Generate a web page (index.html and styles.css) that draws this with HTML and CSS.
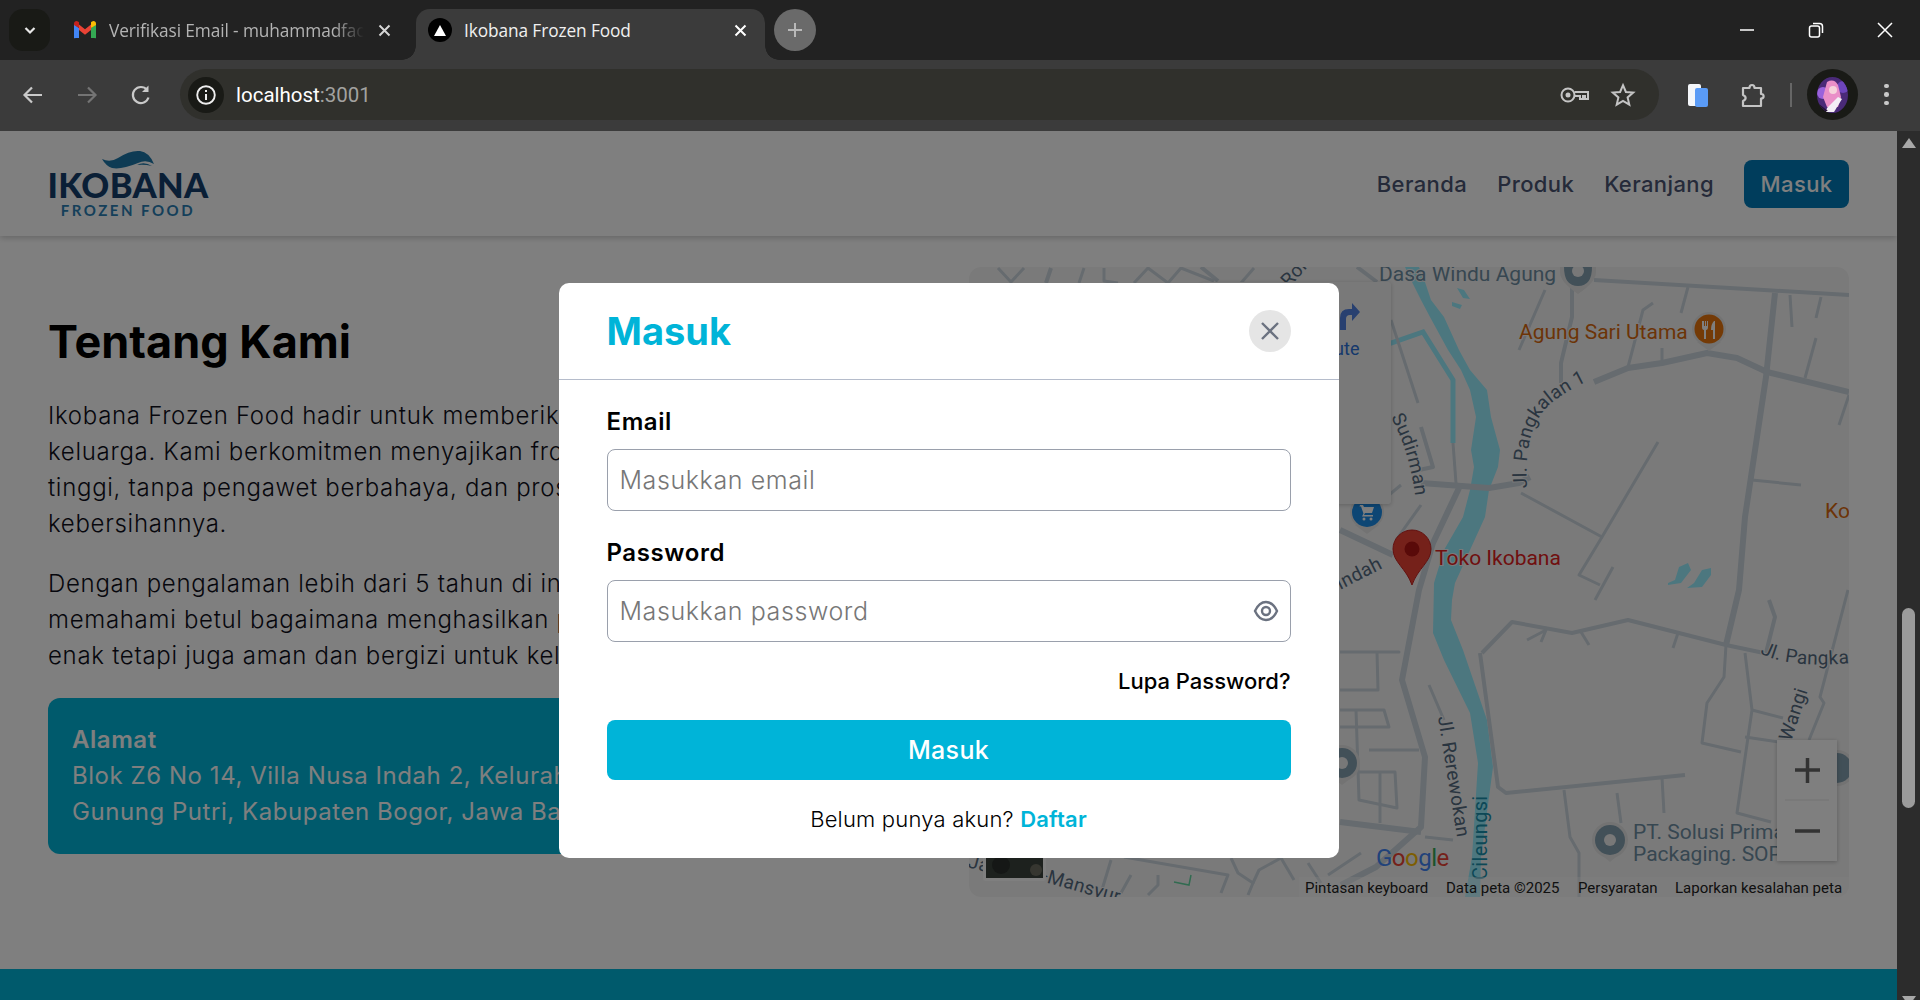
FILE: index.html
```html
<!DOCTYPE html>
<html lang="id">
<head>
    <meta charset="UTF-8">
    <title>Ikobana Frozen Food</title>
    <link rel="stylesheet" href="styles.css">
</head>
<body>
    <div class="tabstrip">
        <div class="tab-search">
            <svg width="16" height="16" viewBox="0 0 16 16"><path d="M3.5 6 8 10.5 12.5 6" fill="none" stroke="#e8e8e8" stroke-width="2.2"/></svg>
        </div>
        <div class="tab">
            <svg class="tab-icon" width="24" height="20" viewBox="0 0 24 20">
                <path d="M1 18V4l5 4v10H2.500A1.500 1.500 0 0 1 1 18z" fill="#4285f4"/>
                <path d="M23 18V4l-5 4v10h3.500A1.500 1.500 0 0 0 23 18z" fill="#34a853"/>
                <path d="M6 10V4.500l6 4.700 6-4.700V10l-6 4.700z" fill="#ea4335"/>
                <path d="M1 5V3.500C1 1.300 3.400.3 5 1.500L6 2.300V8z" fill="#c5221f"/>
                <path d="M23 5V3.500c0-2.200-2.400-3.200-4-2L18 2.300V8z" fill="#fbbc04"/>
            </svg>
            <span class="tab-title">Verifikasi Email - muhammadfachri</span>
            <svg class="tab-close" width="13" height="13" viewBox="0 0 13 13"><path d="M1.500 1.500l10 10M11.500 1.500l-10 10" stroke="#d5d5d5" stroke-width="2"/></svg>
        </div>
        <div class="tab tab-active">
            <span class="favicon"><i></i></span>
            <span class="tab-title">Ikobana Frozen Food</span>
            <svg class="tab-close" width="13" height="13" viewBox="0 0 13 13"><path d="M1.500 1.500l10 10M11.500 1.500l-10 10" stroke="#fff" stroke-width="2"/></svg>
        </div>
        <div class="new-tab">
            <svg width="18" height="18" viewBox="0 0 18 18"><path d="M9 2v14M2 9h14" stroke="#b9b9b9" stroke-width="2"/></svg>
        </div>
        <div class="window-controls">
            <svg width="16" height="16" viewBox="0 0 16 16"><path d="M1 8h14" stroke="#fff" stroke-width="1.500"/></svg>
            <svg width="16" height="16" viewBox="0 0 16 16"><rect x="1.500" y="4" width="10" height="11" rx="2" fill="none" stroke="#fff" stroke-width="1.500"/><path d="M5 1.500h6.500a3 3 0 0 1 3 3V11" fill="none" stroke="#fff" stroke-width="1.500"/></svg>
            <svg width="16" height="16" viewBox="0 0 16 16"><path d="M1 1l14 14M15 1 1 15" stroke="#fff" stroke-width="1.500"/></svg>
        </div>
    </div>

    <div class="toolbar">
        <div class="nav-icons">
            <svg width="24" height="24" viewBox="0 0 24 24"><path d="M21 12H4M11 4.500 3.500 12l7.500 7.500" fill="none" stroke="#c9c9c9" stroke-width="2.200"/></svg>
            <svg width="24" height="24" viewBox="0 0 24 24"><path d="M3 12h17M13 4.500l7.500 7.500-7.500 7.500" fill="none" stroke="#747474" stroke-width="2.200"/></svg>
            <svg width="24" height="24" viewBox="0 0 24 24"><path d="M19.500 14.500A8 8 0 1 1 18 6.800" fill="none" stroke="#c9c9c9" stroke-width="2.200"/><path d="M19.500 2.500v6.500H13z" fill="#c9c9c9"/></svg>
        </div>
        <div class="omnibox">
            <span class="site-info">
                <svg width="22" height="22" viewBox="0 0 22 22"><circle cx="11" cy="11" r="8.800" fill="none" stroke="#eee" stroke-width="1.900"/><path d="M11 10v6M11 6v2" stroke="#eee" stroke-width="2"/></svg>
            </span>
            <span class="url">localhost<em>:3001</em></span>
            <span class="omni-icons">
                <svg width="30" height="20" viewBox="0 0 30 20"><circle cx="8" cy="10" r="6.500" fill="none" stroke="#c4c4c4" stroke-width="2"/><circle cx="8" cy="10" r="2.500" fill="#c4c4c4"/><path d="M14.500 7H28v7h-3v-3h-2v3h-3v-3h-5.500" fill="none" stroke="#c4c4c4" stroke-width="2"/></svg>
                <svg width="26" height="26" viewBox="0 0 26 26"><path d="M13 3.200l2.900 6.800 7.300.6-5.600 4.800 1.700 7.200L13 18.800l-6.300 3.800 1.700-7.200-5.600-4.800 7.300-.6z" fill="none" stroke="#c4c4c4" stroke-width="2"/></svg>
            </span>
        </div>
        <div class="toolbar-end">
            <svg class="ext-blue" width="22" height="26" viewBox="0 0 22 26"><rect x="1" y="2" width="13" height="22" rx="2" fill="#f4f6fa"/><rect x="8" y="6" width="13" height="19" rx="2" fill="#5a9bf6"/></svg>
            <svg class="ext-puzzle" width="26" height="28" viewBox="0 0 26 28"><path d="M3 7h6.500c0-4 5-4 5 0H21v6c3.500 0 3.500 4.500 0 4.500V25H3v-5c3.500-1.500 3.500-4.500 0-6z" fill="none" stroke="#c4c4c4" stroke-width="2.200" stroke-linejoin="round"/></svg>
            <span class="toolbar-sep"></span>
            <span class="avatar-ring">
                <svg width="31" height="36" viewBox="0 0 31 36">
                    <rect width="31" height="36" fill="#4a2a78"/>
                    <circle cx="6" cy="16" r="6" fill="#9a62dc"/>
                    <circle cx="26" cy="10" r="6" fill="#6d45bb"/>
                    <path d="M10 5q7-4 11 3l3 12-3 10H10l-4-10z" fill="#ea8fc8"/>
                    <circle cx="16" cy="13" r="4" fill="#f6d3dc"/>
                    <path d="M10 31l11-11 4 2-8 13H9z" fill="#f3eef5"/>
                    <path d="M2 27l9 7H3z" fill="#251338"/>
                </svg>
            </span>
            <span class="kebab"><i></i><i></i><i></i></span>
        </div>
    </div>

    <div class="viewport">
        <div class="page">
            <header class="site-header">
                <div class="logo">
                    <svg class="logo-wave" width="54" height="20" viewBox="0 0 54 20"><path d="M1 9q8 4 16-1 12-8 22-7 9 1 14 13-8-5-16-1Q20 20 11 18 5 16 1 9z" fill="#1c76a8"/><path d="M36 15q7-4 15 1-8-2-15-1z" fill="#1c76a8"/></svg>
                    <div class="logo-name">IKOBANA</div>
                    <div class="logo-sub">FROZEN FOOD</div>
                </div>
                <nav class="site-nav">
                    <a href="#">Beranda</a>
                    <a href="#">Produk</a>
                    <a href="#">Keranjang</a>
                    <a href="#" class="nav-login">Masuk</a>
                </nav>
            </header>

            <section class="about">
                <div class="about-text">
                    <h2>Tentang Kami</h2>
                    <p>Ikobana Frozen Food hadir untuk memberikan pilihan terbaik bagi<br>keluarga. Kami berkomitmen menyajikan frozen food berkualitas<br>tinggi, tanpa pengawet berbahaya, dan proses produksi yang terjaga<br>kebersihannya.</p>
                    <p>Dengan pengalaman lebih dari 5 tahun di industri makanan, kami<br>memahami betul bagaimana menghasilkan produk yang tidak hanya<br>enak tetapi juga aman dan bergizi untuk keluarga Indonesia.</p>
                    <div class="address-card">
                        <strong>Alamat</strong>
                        <span>Blok Z6 No 14, Villa Nusa Indah 2, Kelurahan Bojong Kulur, Kec.</span>
                        <span>Gunung Putri, Kabupaten Bogor, Jawa Barat</span>
                    </div>
                </div>

                <div class="map">
                    <svg width="881" height="630" viewBox="968 267 881 630">
                        <!-- water -->
                        <path class="water" d="M1404 267L1411 282 1420 300 1429 317 1447 350 1460 370 1469 390 1475 417 1470 450 1473 467 1469 490 1462 517 1443 550 1433 583 1432 633 1443 660 1469 713 1477 763 1471 857 1464 897 1479 897 1480 857 1492 767 1486 720 1462 650 1450 620 1451 600 1454 583 1469 550 1484 517 1488 490 1497 467 1499 450 1490 417 1486 390 1469 370 1458 350 1443 317 1430 300 1424 282 1418 267z"/>
                        <path class="canal" d="M1340 355L1390 343 1422 332 1452 380 1452 443"/>
                        <path class="water" d="M1456 288l7 2 6 9-7-1zM1451 302l10 3-2 4-8-3zM1667 583L1674 580 1678 567 1687 563 1690 570 1680 583 1667 585zM1686 588L1693 583 1701 570 1710 568 1710 575 1701 587z"/>

                        <!-- main roads -->
                        <g class="road-wide">
                            <path d="M1458 488L1432 543 1418 590 1401 680 1424 757 1420 827 1375 867 1340 885"/>
                            <path d="M1420 483L1488 488 1518 483 1529 477"/>
                            <path d="M1593 382L1627 368 1661 363 1706 353 1736 358 1766 372 1848 392"/>
                            <path d="M1774 293L1765 377 1744 517 1738 590 1725 645"/>
                            <path d="M1339 530L1392 555"/>
                            <path d="M1339 822L1420 832"/>
                        </g>
                        <g class="road">
                            <path d="M1593 280L1763 290 1848 295"/>
                            <path d="M1725 645L1763 653"/>
                            <path d="M1481 653L1511 622 1571 633 1627 620 1725 645"/>
                            <path d="M1479 653L1497 787 1505 793 1684 775"/>
                            <path d="M1571 287L1571 317 1560 363 1560 383"/>
                            <path d="M1420 427L1432 467 1418 470"/>
                            <path d="M1768 600L1774 617 1765 653"/>
                            <path d="M1050 268L1045 283"/>
                            <path d="M1200 267L1217 281"/>
                            <path d="M1356 267L1376 282"/>
                        </g>
                        <g class="road-thin">
                            <path d="M1518 350L1544 290"/>
                            <path d="M1627 367L1642 310 1652 303"/>
                            <path d="M1680 313L1687 287"/>
                            <path d="M1661 363L1661 348"/>
                            <path d="M1789 295L1791 327"/>
                            <path d="M1820 297L1815 318"/>
                            <path d="M1815 338L1804 378"/>
                            <path d="M1657 442L1601 537 1520 493"/>
                            <path d="M1601 537L1578 575 1599 585"/>
                            <path d="M1612 567L1594 600"/>
                            <path d="M1751 480L1800 485"/>
                            <path d="M1390 320L1417 403"/>
                            <path d="M1452 443L1455 483"/>
                            <path d="M1370 510L1400 485"/>
                            <path d="M1395 540L1420 505"/>
                            <path d="M1563 790L1569 837 1578 853 1578 897"/>
                            <path d="M1616 793L1620 823"/>
                            <path d="M1661 778L1663 813"/>
                            <path d="M1738 590L1725 645 1723 677 1706 703 1701 743 1740 752"/>
                            <path d="M1744 653L1751 710 1736 813 1770 822"/>
                            <path d="M1751 710L1782 718"/>
                            <path d="M1744 737L1778 742"/>
                            <path d="M1847 590L1819 697 1823 703 1808 740"/>
                            <path d="M1526 640L1545 630 1540 642"/>
                            <path d="M1580 632L1588 645"/>
                            <path d="M1677 633L1672 648"/>
                            <path d="M1339 652L1398 652 1376 652 1377 690 1339 690"/>
                            <path d="M1339 710L1383 710 1388 727 1339 727"/>
                            <path d="M1355 710L1358 800 1396 808 1394 772 1358 772"/>
                            <path d="M1368 750L1418 750"/>
                            <path d="M1379 772L1379 823"/>
                            <path d="M1428 685L1443 720"/>
                            <path d="M1424 837L1452 840"/>
                            <path d="M1110 860L1100 893"/>
                            <path d="M1130 875L1120 893"/>
                            <path d="M1157 875L1157 885 1147 895"/>
                            <path d="M1123 857L1227 875 1220 893"/>
                            <path d="M1230 858L1237 873 1252 883 1247 895"/>
                            <path d="M1280 858L1258 870 1252 883"/>
                            <path d="M1280 858L1293 880"/>
                            <path d="M1307 863L1320 883"/>
                            <path d="M1327 875L1360 853"/>
                            <path d="M997 268L1010 282 1023 268"/>
                            <path d="M1083 268L1078 283"/>
                            <path d="M1103 268L1103 281 1117 283"/>
                            <path d="M1133 283L1147 268 1167 283 1180 268 1213 281"/>
                            <path d="M1253 268L1240 283"/>
                            <path d="M1838 425L1848 395"/>
                        </g>
                        <path class="green-line" d="M1173 882L1188 885 1190 875"/>

                        <!-- road names -->
                        <path id="pangkalan" class="guide" d="M1526 488Q1522 430 1548 405 1568 388 1606 372"/>
                        <text class="road-name"><textPath href="#pangkalan">Jl. Pangkalan 1</textPath></text>
                        <path id="sudirman" class="guide" d="M1390 417Q1408 450 1414 495"/>
                        <text class="road-name"><textPath href="#sudirman">Sudirman</textPath></text>
                        <path id="pangka" class="guide" d="M1759 653Q1790 670 1860 662"/>
                        <text class="road-name"><textPath href="#pangka">Jl. Pangkalan</textPath></text>
                        <text class="road-name" transform="translate(1437 717) rotate(81)">Jl. Rerewokan</text>
                        <text class="road-name" transform="translate(1790 742) rotate(-72)">Wangi</text>
                        <text class="road-name" transform="translate(1339 590) rotate(-27)">Indah</text>
                        <text class="road-name" transform="translate(1023 876) rotate(16)">Al-Mansyur</text>
                        <text class="road-name" transform="translate(966 867) rotate(15)">Ja</text>
                        <text class="road-name" transform="translate(1288 288) rotate(-48)">Ron</text>
                        <text class="river-name" transform="translate(1486 880) rotate(-90)">Cileungsi</text>

                        <!-- places -->
                        <text class="place place-gray" x="1378" y="281">Dasa Windu Agung</text>
                        <path class="pin-halo" d="M1559 267h36v5q0 10-18 22-18-12-18-22z"/>
                        <path class="pin-gray" d="M1563 267h28q0 19-14 19t-14-19z"/>
                        <circle class="pin-eye" cx="1577" cy="271" r="6"/>

                        <text class="place place-orange" x="1518" y="339">Agung Sari Utama</text>
                        <circle class="pin-halo" cx="1708" cy="329" r="17"/>
                        <path class="pin-halo" d="M1696 342h24l-12 9z"/>
                        <circle class="pin-orange" cx="1708" cy="329" r="14.500"/>
                        <path class="pin-icon" d="M1701 321v6q0 3 2 3v9h2v-9q2 0 2-3v-6h-1v5h-1v-5h-1v5h-1v-5zM1713 321q-3 3-3 9h2v9h2v-18z"/>

                        <text class="place place-orange" x="1824" y="518">Ko</text>

                        <circle class="pin-halo" cx="1366" cy="512" r="17"/>
                        <path class="pin-halo" d="M1354 525h24l-12 9z"/>
                        <circle class="pin-blue" cx="1366" cy="512" r="15"/>
                        <path class="pin-icon" d="M1359 505h3l1 2h10l-2 6h-7l-1 2h9v1.500h-11l1.500-3-2.500-7h-1.500z"/>
                        <circle class="pin-icon" cx="1363" cy="519" r="1.500"/>
                        <circle class="pin-icon" cx="1370" cy="519" r="1.500"/>

                        <circle class="pin-halo" cx="1341" cy="763" r="18"/>
                        <path class="pin-halo" d="M1329 776h24l-12 9z"/>
                        <circle class="pin-gray" cx="1341" cy="763" r="15"/>
                        <circle class="pin-eye" cx="1341" cy="763" r="6"/>

                        <circle class="pin-halo" cx="1836" cy="768" r="18"/>
                        <circle class="pin-gray" cx="1836" cy="768" r="15"/>

                        <circle class="pin-halo" cx="1609" cy="840" r="18"/>
                        <path class="pin-halo" d="M1597 852h24l-12 10z"/>
                        <circle class="pin-gray" cx="1609" cy="840" r="15"/>
                        <circle class="pin-eye" cx="1609" cy="840" r="6"/>
                        <text class="place place-gray" x="1632" y="839">PT. Solusi Prima</text>
                        <text class="place place-gray" x="1632" y="861">Packaging. SOP</text>

                        <path class="marker" d="M1411 585C1405 568 1392 562 1392 549a19 19 0 0 1 38 0C1430 562 1417 568 1411 585z"/>
                        <circle class="marker-dot" cx="1411" cy="549" r="7.500"/>
                        <text class="place place-red" x="1434" y="565">Toko Ikobana</text>

                        <!-- street view panel behind the dialog -->
                        <rect class="map-panel" x="1200" y="282" width="190" height="222" rx="3"/>
                        <path class="panel-arrow" d="M1339 330v-12q0-9 9-9h3v-6l8 9-8 9v-6h-2q-4 0-4 4v11z"/>
                        <text class="panel-label" x="1322" y="355">Rute</text>

                        <!-- satellite thumbnail -->
                        <rect class="thumb-frame" x="982" y="840" width="63" height="41" rx="3"/>
                        <rect class="thumb-photo" x="985" y="840" width="57" height="38"/>
                        <circle class="thumb-spot" cx="1000" cy="865" r="9"/>
                        <circle class="thumb-spot2" cx="1035" cy="870" r="6"/>

                        <!-- attribution -->
                        <rect class="attrib-bg" x="1298" y="877" width="551" height="20"/>
                        <text class="attrib" x="1304" y="893">Pintasan keyboard</text>
                        <text class="attrib" x="1445" y="893">Data peta ©2025</text>
                        <text class="attrib" x="1577" y="893">Persyaratan</text>
                        <text class="attrib" x="1674" y="893">Laporkan kesalahan peta</text>
                        <text class="google-logo" x="1375" y="866"><tspan fill="#4285f4">G</tspan><tspan fill="#ea4335">o</tspan><tspan fill="#fbbc04">o</tspan><tspan fill="#4285f4">g</tspan><tspan fill="#34a853">l</tspan><tspan fill="#ea4335">e</tspan></text>

                        <!-- zoom control -->
                        <rect class="zoom-box" x="1776" y="740" width="60" height="121"/>
                        <path class="zoom-sep" d="M1784 800h44"/>
                        <path class="zoom-mark" d="M1794 770h25M1806.500 758v25M1794 831h25"/>
                    </svg>
                </div>
            </section>

            <footer class="site-footer"></footer>

            <div class="overlay">
                <div class="modal">
                    <div class="modal-head">
                        <h3>Masuk</h3>
                        <button class="modal-close" type="button">
                            <svg width="22" height="22" viewBox="0 0 22 22"><path d="M3 3l16 16M19 3 3 19" stroke="#6b7280" stroke-width="2.400"/></svg>
                        </button>
                    </div>
                    <form class="modal-body">
                        <label for="email">Email</label>
                        <input id="email" type="email" placeholder="Masukkan email">
                        <label for="password">Password</label>
                        <div class="password-field">
                            <input id="password" type="password" placeholder="Masukkan password">
                            <svg class="eye" width="26" height="26" viewBox="0 0 26 26"><path d="M2 13C5 6.500 8.500 4 13 4s8 2.500 11 9c-3 6.500-6.500 9-11 9s-8-2.500-11-9z" fill="none" stroke="#6b7280" stroke-width="2.400"/><circle cx="13" cy="13" r="4" fill="none" stroke="#6b7280" stroke-width="2.400"/></svg>
                        </div>
                        <div class="forgot"><a href="#">Lupa Password?</a></div>
                        <button class="submit" type="button">Masuk</button>
                        <p class="signup">Belum punya akun? <a href="#">Daftar</a></p>
                    </form>
                </div>
            </div>
        </div>

        <div class="scrollbar">
            <i class="arrow-up"></i>
            <div class="scroll-track"><div class="scroll-thumb"></div></div>
            <i class="arrow-down"></i>
        </div>
    </div>
</body>
</html>
```

FILE: styles.css
```css
* {
    box-sizing: border-box;
}

html, body {
    height: 100%;
}

body {
    margin: 0;
    height: 1000px;
    overflow: hidden;
    display: flex;
    flex-direction: column;
    font-family: Inter, "Noto Sans", sans-serif;
    background: #222;
}

/* Browser chrome */
.tabstrip {
    height: 60px;
    display: flex;
    align-items: flex-end;
    background: #222;
    font-family: "Open Sans", sans-serif;
}

.tab-search {
    width: 41px;
    height: 42px;
    margin: 0 0 9px 9px;
    border-radius: 14px;
    background: #191a16;
    display: flex;
    align-items: center;
    justify-content: center;
}

.tab {
    width: 349px;
    height: 51px;
    padding: 0 18px 9px 12px;
    display: flex;
    align-items: center;
    color: #b4b4b4;
    font-size: 17.300px;
    letter-spacing: -0.1px;
}

.tab:nth-child(2) {
    width: 357px;
    margin-left: 9px;
    padding-left: 14px;
    padding-right: 25px;
}

.tab-icon {
    margin-right: 12px;
    flex: none;
}

.tab-title {
    flex: 1;
    overflow: hidden;
    white-space: nowrap;
    -webkit-mask-image: linear-gradient(90deg, #000 88%, transparent);
    mask-image: linear-gradient(90deg, #000 88%, transparent);
}

.tab-close {
    flex: none;
    margin-left: 14px;
}

.tab-active {
    position: relative;
    background: #3b3b3b;
    border-radius: 14px 14px 0 0;
    color: #f0f0f0;
}

/* the little outward curves at the foot of the active tab */
.tab-active::before, .tab-active::after {
    content: "";
    position: absolute;
    bottom: 0;
    width: 14px;
    height: 14px;
}

.tab-active::before {
    left: -14px;
    background: radial-gradient(circle at 0 0, transparent 13.500px, #3b3b3b 14px);
}

.tab-active::after {
    right: -14px;
    background: radial-gradient(circle at 100% 0, transparent 13.500px, #3b3b3b 14px);
}

.tab-active .tab-title {
    -webkit-mask-image: none;
    mask-image: none;
}

.favicon {
    width: 24px;
    height: 24px;
    margin-right: 12px;
    flex: none;
    border-radius: 50%;
    background: #000;
    display: flex;
    align-items: center;
    justify-content: center;
}

.favicon i {
    width: 0;
    height: 0;
    border-left: 6px solid transparent;
    border-right: 6px solid transparent;
    border-bottom: 11px solid #fff;
}

.new-tab {
    width: 42px;
    height: 42px;
    margin: 0 0 9px 9px;
    border-radius: 50%;
    background: #6a6a6a;
    display: flex;
    align-items: center;
    justify-content: center;
}

.window-controls {
    margin-left: auto;
    height: 60px;
    display: flex;
    align-items: center;
    gap: 53px;
    padding-right: 27px;
}

.toolbar {
    height: 71px;
    padding-bottom: 2px;
    background: #3b3b3b;
    display: flex;
    align-items: center;
}

.nav-icons {
    width: 180px;
    padding-left: 21px;
    display: flex;
    gap: 30px;
}

.omnibox {
    width: 1479px;
    height: 51px;
    border-radius: 26px;
    background: #30302c;
    display: flex;
    align-items: center;
    padding-left: 8px;
}

.site-info {
    width: 36px;
    height: 36px;
    border-radius: 50%;
    background: #191a16;
    display: flex;
    align-items: center;
    justify-content: center;
}

.url {
    margin-left: 12px;
    font-family: Roboto, sans-serif;
    font-size: 20.500px;
    color: #fff;
}

.url em {
    font-style: normal;
    color: #a2a2a0;
}

.omni-icons {
    margin-left: auto;
    padding-right: 23px;
    display: flex;
    align-items: center;
    gap: 20px;
}

.toolbar-end {
    flex: 1;
    display: flex;
    align-items: center;
    height: 51px;
    padding-left: 28px;
}

.ext-puzzle {
    margin-left: 31px;
}

.toolbar-sep {
    width: 2px;
    height: 24px;
    margin-left: 24px;
    background: #666;
}

.avatar-ring {
    width: 51px;
    height: 51px;
    margin-left: 15px;
    border-radius: 50%;
    background: #191a16;
    display: flex;
    align-items: center;
    justify-content: center;
}

.avatar-ring svg {
    border-radius: 50%;
}

.kebab {
    margin-left: 26px;
    display: flex;
    flex-direction: column;
    gap: 4px;
}

.kebab i {
    width: 4.500px;
    height: 4.500px;
    border-radius: 50%;
    background: #c9c9c9;
}

/* Page */
.viewport {
    flex: 1;
    min-height: 0;
    display: flex;
}

.page {
    flex: 1;
    position: relative;
    overflow: hidden;
    background: #fff;
    color: #0f0f1a;
}

.site-header {
    height: 105px;
    padding: 0 48px;
    display: flex;
    align-items: center;
    justify-content: space-between;
    background: #fff;
    box-shadow: 0 2px 6px rgba(0, 0, 0, 0.2);
    position: relative;
}

.logo {
    width: 160px;
    display: flex;
    flex-direction: column;
    align-items: center;
    padding-top: 2px;
}

.logo-wave {
    display: block;
    margin-bottom: -1px;
}

.logo-name {
    font-family: Lato, sans-serif;
    font-weight: 900;
    font-size: 34.500px;
    line-height: 32px;
    letter-spacing: 0.3px;
    color: #143e6c;
}

.logo-sub {
    font-family: Lato, sans-serif;
    font-weight: 700;
    font-size: 15px;
    line-height: 18px;
    letter-spacing: 2.500px;
    color: #2a7fb5;
}

.site-nav {
    display: flex;
    align-items: center;
    gap: 30px;
}

.site-nav a {
    font-size: 22px;
    font-weight: 500;
    letter-spacing: 0.4px;
    color: #4b5573;
    text-decoration: none;
}

.site-nav .nav-login {
    height: 48px;
    width: 105px;
    display: flex;
    align-items: center;
    justify-content: center;
    border-radius: 8px;
    background: #007ab8;
    color: #fff;
}

.about {
    height: 733px;
    padding: 31px 48px 72px;
    display: grid;
    grid-template-columns: 1fr 1fr;
    gap: 40px;
    align-items: center;
}

.about-text {
    padding-top: 2px;
}

.about-text h2 {
    margin: 0 0 26px;
    font-size: 45px;
    line-height: 60px;
    font-weight: 700;
    color: #000;
    white-space: nowrap;
}

.about-text p {
    margin: 0 0 24px;
    font-size: 24px;
    line-height: 36px;
    font-weight: 300;
    letter-spacing: 0.7px;
    white-space: nowrap;
}

.address-card {
    height: 156px;
    padding: 24px;
    border-radius: 12px;
    background: #00b4d8;
    color: #fff;
    display: flex;
    flex-direction: column;
    font-size: 24px;
    line-height: 36px;
    font-weight: 400;
    letter-spacing: 0.55px;
    white-space: nowrap;
    overflow: hidden;
}

.address-card strong {
    font-weight: 600;
}

.map {
    height: 630px;
    border-radius: 12px;
    overflow: hidden;
    background: #f5f5f5;
    font-family: Roboto, sans-serif;
}

.map svg {
    display: block;
}

.water {
    fill: #98eeff;
}

.canal {
    fill: none;
    stroke: #98eeff;
    stroke-width: 5;
}

.road-wide, .road, .road-thin {
    fill: none;
    stroke: #ccd6de;
    stroke-linejoin: round;
}

.road-wide {
    stroke-width: 6;
}

.road {
    stroke-width: 4;
}

.road-thin {
    stroke-width: 3;
}

.green-line {
    fill: none;
    stroke: #62d6a0;
    stroke-width: 1.500;
}

.guide {
    fill: none;
}

.road-name {
    font-size: 19px;
    fill: #546a80;
    letter-spacing: 0.3px;
    paint-order: stroke;
    stroke: #f5f5f5;
    stroke-width: 2px;
}

.river-name {
    font-size: 20px;
    fill: #1a90ad;
    letter-spacing: 0.3px;
}

.place {
    font-size: 21px;
    paint-order: stroke;
    stroke: #f5f5f5;
    stroke-width: 2px;
}

.place-gray {
    fill: #6f8ea3;
}

.place-orange {
    fill: #d9690f;
}

.place-red {
    fill: #e02020;
}

.pin-halo {
    fill: #e6e6e6;
}

.pin-gray {
    fill: #84a0b0;
}

.pin-eye {
    fill: #f0f0f0;
}

.pin-orange {
    fill: #e8750c;
}

.pin-blue {
    fill: #1a8ce8;
}

.pin-icon {
    fill: #fff;
}

.marker {
    fill: #ea4335;
    stroke: #c5221f;
    stroke-width: 1;
}

.marker-dot {
    fill: #b31412;
}

.map-panel {
    fill: #f3f3f3;
    filter: drop-shadow(0 1px 2px rgba(0, 0, 0, 0.2));
}

.panel-arrow {
    fill: #5080e0;
}

.panel-label {
    font-size: 18px;
    fill: #2a70d8;
}

.thumb-frame {
    fill: #fff;
}

.thumb-photo {
    fill: #3a423c;
}

.thumb-spot {
    fill: #2a2f2c;
}

.thumb-spot2 {
    fill: #6d6d60;
}

.attrib-bg {
    fill: rgba(255, 255, 255, 0.4);
}

.attrib {
    font-size: 15px;
    fill: #222;
}

.google-logo {
    font-size: 24px;
    font-weight: 400;
    letter-spacing: -0.5px;
}

.zoom-box {
    fill: #fff;
    filter: drop-shadow(0 1px 2px rgba(0, 0, 0, 0.25));
}

.zoom-sep {
    stroke: #e6e6e6;
    stroke-width: 1;
}

.zoom-mark {
    stroke: #666;
    stroke-width: 3.500;
}

.site-footer {
    height: 31px;
    background: #00b4d8;
}

/* Login dialog */
.overlay {
    position: absolute;
    top: 0;
    left: 0;
    right: 0;
    bottom: 0;
    padding-top: 10px;
    background: rgba(0, 0, 0, 0.5);
    display: flex;
    align-items: center;
    justify-content: center;
}

.modal {
    width: 780px;
    height: 575px;
    border-radius: 10px;
    background: #fff;
    color: #000;
}

.modal-head {
    height: 97px;
    padding: 0 48px;
    border-bottom: 1px solid #b5bccb;
    display: flex;
    align-items: center;
    justify-content: space-between;
}

.modal-head h3 {
    margin: 0;
    font-size: 38px;
    font-weight: 700;
    color: #00b4d8;
}

.modal-close {
    width: 42px;
    height: 42px;
    padding: 0;
    border: none;
    border-radius: 50%;
    background: #e5e5e5;
    display: flex;
    align-items: center;
    justify-content: center;
}

.modal-body {
    padding: 27px 48px 0;
    display: flex;
    flex-direction: column;
}

.modal-body label {
    font-size: 24px;
    line-height: 30px;
    font-weight: 600;
    letter-spacing: 0.6px;
    margin-bottom: 12px;
}

.modal-body input {
    width: 100%;
    height: 62px;
    padding: 0 12px;
    border: 1px solid #9aa0ac;
    border-radius: 8px;
    font-family: inherit;
    font-size: 25px;
    font-weight: 300;
    letter-spacing: 0.6px;
    margin-bottom: 27px;
    outline: none;
}

.modal-body input::placeholder {
    color: #777;
}

.password-field {
    position: relative;
}

.password-field input {
    margin-bottom: 0;
}

.eye {
    position: absolute;
    right: 12px;
    top: 18px;
}

.forgot {
    margin: 24px 0;
    text-align: right;
    font-size: 22px;
    line-height: 30px;
    font-weight: 500;
}

.forgot a {
    color: #000;
    text-decoration: none;
}

.submit {
    height: 60px;
    border: none;
    border-radius: 8px;
    background: #00b4d8;
    color: #fff;
    font-family: inherit;
    font-size: 25px;
    font-weight: 500;
    letter-spacing: 0.3px;
}

.signup {
    margin: 24px 0 0;
    text-align: center;
    font-size: 22px;
    line-height: 30px;
    font-weight: 300;
    letter-spacing: 0.2px;
}

.signup a {
    color: #00b4d8;
    font-weight: 600;
    text-decoration: none;
}

/* Scrollbar */
.scrollbar {
    width: 23px;
    background: #2c2c2c;
    display: flex;
    flex-direction: column;
    align-items: center;
    padding: 7px 0 0;
}

.arrow-up, .arrow-down {
    width: 0;
    height: 0;
    border-left: 7px solid transparent;
    border-right: 7px solid transparent;
}

.arrow-up {
    border-bottom: 10px solid #a8a8a8;
}

.arrow-down {
    border-top: 10px solid #a8a8a8;
    margin-top: auto;
    margin-bottom: -6px;
}

.scroll-track {
    width: 13px;
    margin-top: 460px;
}

.scroll-thumb {
    height: 200px;
    border-radius: 7px;
    background: #9b9b9b;
}
```
